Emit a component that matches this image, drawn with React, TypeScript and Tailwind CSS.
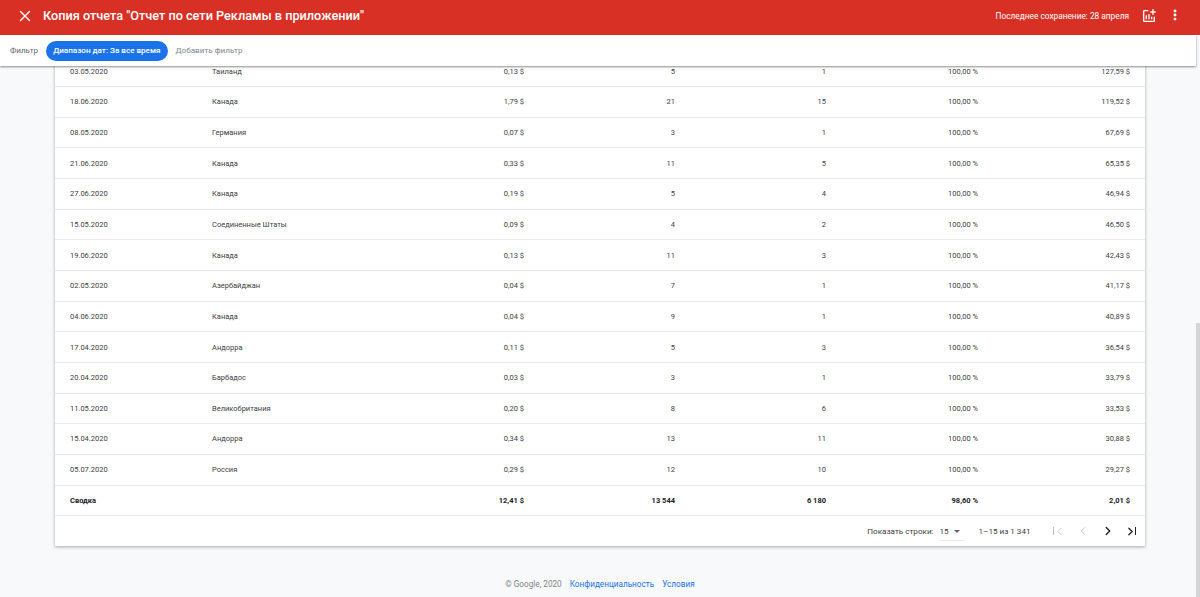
import { ChevronLeft, ChevronRight, MoreVertical, X } from 'lucide-react';

const ROWS = [
  ['03.05.2020', 'Таиланд', '0,13 $', '5', '1', '100,00 %', '127,59 $'],
  ['18.06.2020', 'Канада', '1,79 $', '21', '15', '100,00 %', '119,52 $'],
  ['08.05.2020', 'Германия', '0,07 $', '3', '1', '100,00 %', '67,69 $'],
  ['21.06.2020', 'Канада', '0,33 $', '11', '5', '100,00 %', '65,35 $'],
  ['27.06.2020', 'Канада', '0,19 $', '5', '4', '100,00 %', '46,94 $'],
  ['15.05.2020', 'Соединенные Штаты', '0,09 $', '4', '2', '100,00 %', '46,50 $'],
  ['19.06.2020', 'Канада', '0,13 $', '11', '3', '100,00 %', '42,43 $'],
  ['02.05.2020', 'Азербайджан', '0,04 $', '7', '1', '100,00 %', '41,17 $'],
  ['04.06.2020', 'Канада', '0,04 $', '9', '1', '100,00 %', '40,89 $'],
  ['17.04.2020', 'Андорра', '0,11 $', '5', '3', '100,00 %', '36,54 $'],
  ['20.04.2020', 'Барбадос', '0,03 $', '3', '1', '100,00 %', '33,79 $'],
  ['11.05.2020', 'Великобритания', '0,20 $', '8', '6', '100,00 %', '33,53 $'],
  ['15.04.2020', 'Андорра', '0,34 $', '13', '11', '100,00 %', '30,88 $'],
  ['05.07.2020', 'Россия', '0,29 $', '12', '10', '100,00 %', '29,27 $'],
];

const SUMMARY = ['Сводка', '', '12,41 $', '13 544', '6 180', '98,60 %', '2,01 $'];

function TableRow({ cells, bold }: { cells: string[]; bold?: boolean }) {
  return (
    <div
      className={`grid grid-cols-[142px_161px_151px_151px_151px_152px_152px] items-center h-[30.65px] pl-[15px] border-b border-[#e8eaed] text-[7.5px] ${
        bold ? 'font-bold text-[#202124]' : 'text-[#3c4043]'
      }`}
    >
      {cells.map((c, i) => (
        <div key={i} className={i > 1 ? 'text-right' : ''}>
          {c}
        </div>
      ))}
    </div>
  );
}

export default function App() {
  return (
    <div className="h-[597px] flex flex-col overflow-hidden bg-[#f8f9fa] font-['Roboto',sans-serif]">
      <header className="h-[35px] shrink-0 flex items-center bg-[#d93025] text-white pl-[16px] pr-[18px] pb-[3px]">
        <X size={18} strokeWidth={1.8} className="shrink-0" />
        <h1 className="ml-[9px] text-[12.7px] font-medium">Копия отчета "Отчет по сети Рекламы в приложении"</h1>
        <span className="ml-auto text-[8.3px]">Последнее сохранение: 28 апреля</span>
        <svg width="16" height="16" viewBox="0 0 24 24" className="ml-[12px] shrink-0" fill="white">
          <path d="M22 5v2h-3v3h-2V7h-3V5h3V2h2v3h3zm-3 14H5V5h6V3H5c-1.1 0-2 .9-2 2v14c0 1.1.9 2 2 2h14c1.1 0 2-.9 2-2v-6h-2v6zm-4-6v4h2v-4h-2zm-4 4h2V9h-2v8zm-2 0v-6H7v6h2z" />
        </svg>
        <MoreVertical size={14} strokeWidth={3} className="ml-[11px] mb-[3px] shrink-0" />
      </header>

      <div className="relative z-10 h-[31px] shrink-0 mr-[4px] flex items-center bg-white pl-[10px] text-[8.1px] shadow-[0_1px_2px_rgba(60,64,67,0.6)]">
        <span className="text-[#5f6368]">Фильтр</span>
        <span className="ml-[8px] h-5 px-[7px] flex items-center rounded-full bg-[#1a73e8] text-white font-medium">
          Диапазон дат: За все время
        </span>
        <span className="ml-[8px] text-[#80868b]">Добавить фильтр</span>
      </div>

      <div className="flex-1 flex min-h-0">
        <main className="flex-1 min-w-0 overflow-hidden flex flex-col pl-[55px] pr-[51px]">
          <div className="-mt-[9.45px] bg-white shadow-[0_1px_3px_rgba(60,64,67,0.45)] shrink-0">
            {ROWS.map((r) => (
              <TableRow key={r[0]} cells={r} />
            ))}
            <TableRow cells={SUMMARY} bold />
            <div className="h-[30px] flex items-center justify-end text-[8.1px] text-[#3c4043]">
              <span>Показать строки:</span>
              <span className="ml-[6px] w-6 h-[20px] flex items-center gap-[5px] border-b border-[#e8eaed] pt-[1px]">
                15
                <span className="w-0 h-0 border-x-[3px] border-x-transparent border-t-[3px] border-t-[#5f6368]" />
              </span>
              <span className="ml-[15px]">1–15 из 1 341</span>
              <span className="ml-[22px] mr-[9px] flex items-center">
                <span className="flex items-center text-[#bdc1c6]">
                  <span className="w-px h-[8px] bg-[#bdc1c6]" />
                  <ChevronLeft size={13} strokeWidth={1.5} className="-ml-[1px]" />
                </span>
                <ChevronLeft size={14} strokeWidth={1.5} className="text-[#bdc1c6] ml-[10px]" />
                <ChevronRight size={14} strokeWidth={2.5} className="text-[#202124] ml-[11px]" />
                <span className="flex items-center text-[#202124] ml-[9px]">
                  <ChevronRight size={13} strokeWidth={2.5} className="-mr-[2px]" />
                  <span className="w-[1.5px] h-[8px] bg-[#202124]" />
                </span>
              </span>
            </div>
          </div>
          <footer className="mt-[31.5px] flex justify-center gap-[8px] text-[8.2px] text-[#80868b]">
            <span>© Google, 2020</span>
            <span className="text-[#1a73e8]">Конфиденциальность</span>
            <span className="text-[#1a73e8]">Условия</span>
          </footer>
        </main>
        <div className="w-[4px] shrink-0 flex flex-col justify-end">
          <div className="h-[274px] bg-[#d6d6d6]" />
        </div>
      </div>
    </div>
  );
}
